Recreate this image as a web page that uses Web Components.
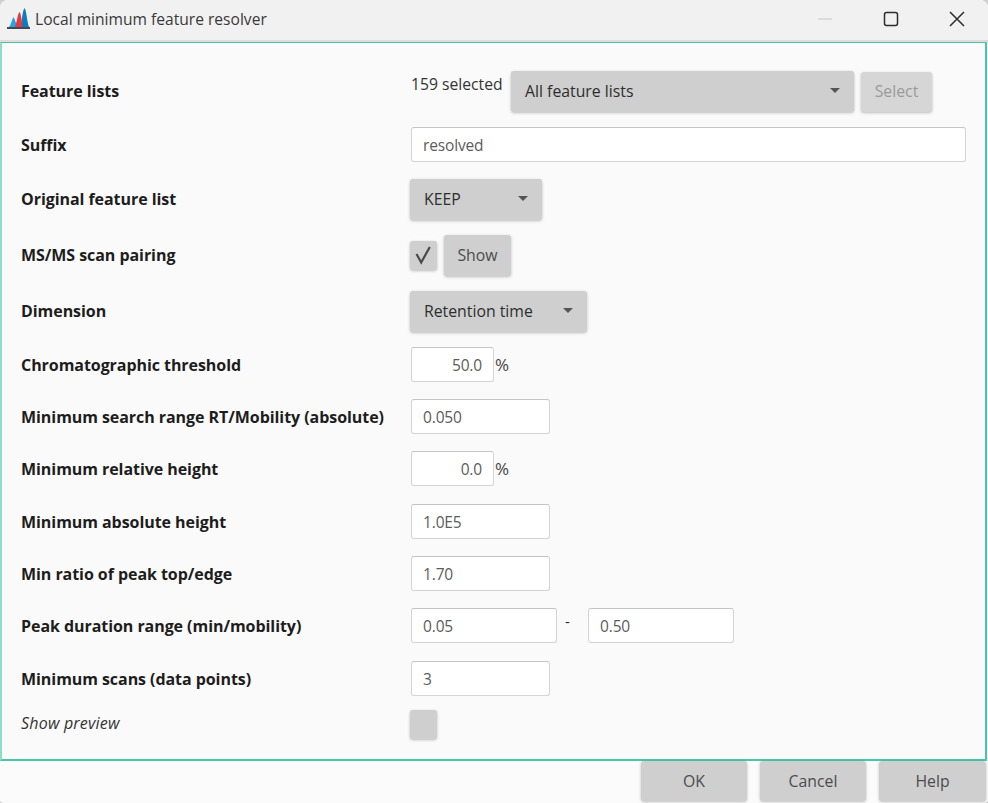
<!DOCTYPE html>
<html>
<head>
<meta charset="utf-8">
<title>Local minimum feature resolver</title>
<style>
  html, body { margin: 0; height: 100%; background: #cfcfcf; }
  body { font-family: "Open Sans", "Noto Sans", sans-serif; color: #2b2b2b; overflow: hidden; }
</style>
</head>
<body>
<app-window>
  <title-bar slot="title">Local minimum feature resolver</title-bar>
  <form-panel>
    <form-row label="Feature lists" h="41" gap="0" tall>
      <span style="flex:none;width:92px;white-space:nowrap;font-size:15.7px;margin:-16px 8px 0 1px;color:#333">159 selected</span>
      <combo-box w="343">All feature lists</combo-box>
      <push-button w="71" h="40" disabled style="margin-left:7px;padding-bottom:2px">Select</push-button>
    </form-row>
    <form-row label="Suffix" h="35" gap="15"><text-field w="555" style="margin-left:1px">resolved</text-field></form-row>
    <form-row label="Original feature list" h="41" gap="17" tall><combo-box w="132">KEEP</combo-box></form-row>
    <form-row label="MS/MS scan pairing" h="41" gap="15" tall>
      <check-box checked></check-box>
      <push-button w="67" h="41" style="margin-left:7px;padding-bottom:2px">Show</push-button>
    </form-row>
    <form-row label="Dimension" h="41" gap="15" tall><combo-box w="177">Retention time</combo-box></form-row>
    <form-row label="Chromatographic threshold" h="35" gap="15"><text-field w="83" end style="margin-left:1px">50.0</text-field><unit-text>%</unit-text></form-row>
    <form-row label="Minimum search range RT/Mobility (absolute)" h="35" gap="17"><text-field w="139" style="margin-left:1px">0.050</text-field></form-row>
    <form-row label="Minimum relative height" h="35" gap="17"><text-field w="83" end style="margin-left:1px">0.0</text-field><unit-text>%</unit-text></form-row>
    <form-row label="Minimum absolute height" h="35" gap="18"><text-field w="139" style="margin-left:1px">1.0E5</text-field></form-row>
    <form-row label="Min ratio of peak top/edge" h="35" gap="17"><text-field w="139" style="margin-left:1px">1.70</text-field></form-row>
    <form-row label="Peak duration range (min/mobility)" h="35" gap="17">
      <text-field w="146" style="margin-left:1px">0.05</text-field>
      <span style="width:31px;box-sizing:border-box;padding-left:8px;font-size:15px;margin-top:-10px">-</span>
      <text-field w="146">0.50</text-field>
    </form-row>
    <form-row label="Minimum scans (data points)" h="35" gap="18"><text-field w="139" style="margin-left:1px">3</text-field></form-row>
    <form-row label="Show preview" h="30" gap="13" plain><check-box></check-box></form-row>
  </form-panel>
  <button-bar slot="footer">
    <push-button w="106" h="40">OK</push-button>
    <push-button w="106" h="40">Cancel</push-button>
    <push-button w="107" h="40">Help</push-button>
  </button-bar>
</app-window>

<script>
function shadow(el, html) {
  el.attachShadow({ mode: "open" });
  el.shadowRoot.innerHTML = html;
}

class AppWindow extends HTMLElement {
  constructor() {
    super();
    shadow(this, `
      <style>
        :host { display: flex; flex-direction: column; height: 803px; width: 988px; box-sizing: border-box;
                padding-bottom: 1px; background: #fbfbfb; border-radius: 8px 8px 4px 4px; overflow: hidden; }
      </style>
      <slot name="title"></slot>
      <slot></slot>
      <slot name="footer"></slot>
    `);
  }
}

class TitleBar extends HTMLElement {
  constructor() {
    super();
    shadow(this, `
      <style>
        :host { display: flex; align-items: center; height: 42px; box-sizing: border-box; background: #f1f1f1;
                border-bottom: 2px solid #dcdcdc; padding: 0 0 3px 7px; font-size: 15.6px; color: #3a3a3a; }
        svg.logo { width: 23px; height: 23px; margin-right: 5px; flex: none; }
        .name { flex: 1; }
        .ctl { width: 66px; height: 37px; display: flex; align-items: center; justify-content: center; }
        .ctl:last-child { margin-right: -2px; }
        .ctl svg { width: 16px; height: 16px; fill: none; stroke: #2c2c2c; stroke-width: 1.5; }
      </style>
      <svg class="logo" viewBox="0 0 23 23">
        <path d="M2 20 C4 18 5 12 6.5 10 C8 12 9 17 11 20Z" fill="#22a7e0"/>
        <path d="M13 20 C15 15 15.5 3 17.5 1 C19.5 3 20 15 22 20Z" fill="#0f7cc0"/>
        <path d="M8 20 C10 15 10.5 7 12.5 5 C14.5 7 14.5 15 15.5 20Z" fill="#e63a40"/>
        <rect x="0" y="20" width="23" height="2" fill="#3b4a5c"/>
      </svg>
      <span class="name"><slot></slot></span>
      <span class="ctl"><svg viewBox="0 0 16 16" style="stroke:#d4d4d4"><path d="M1 8h14"/></svg></span>
      <span class="ctl"><svg viewBox="0 0 16 16"><rect x="1.5" y="1.5" width="13" height="13" rx="2"/></svg></span>
      <span class="ctl"><svg viewBox="0 0 16 16"><path d="M1 1l14 14M15 1L1 15"/></svg></span>
    `);
  }
}

class FormPanel extends HTMLElement {
  constructor() {
    super();
    shadow(this, `
      <style>
        :host { display: block; height: 719px; box-sizing: border-box; background: #fafafa; margin-right: 1px;
                border: 2px solid #49c6a6; border-top-width: 1px; border-left-color: #8fdcc8; padding: 28px 19px 0; }
      </style>
      <slot></slot>
    `);
  }
}

class FormRow extends HTMLElement {
  constructor() {
    super();
    shadow(this, `
      <style>
        :host { display: grid; grid-template-columns: 389px 1fr; align-items: center; }
        .label { font-size: 16px; font-weight: 700; letter-spacing: -.06px; color: #1d1d1d; white-space: nowrap; }
        :host([tall]) .label { margin-top: -2px; }
        :host([plain]) .label { font-weight: 400; font-style: italic; color: #333; letter-spacing: .2px; margin-top: -3px; }
        .field { display: flex; align-items: center; }
      </style>
      <span class="label"></span>
      <div class="field"><slot></slot></div>
    `);
  }
  connectedCallback() {
    this.shadowRoot.querySelector(".label").textContent = this.getAttribute("label");
    this.style.height = this.getAttribute("h") + "px";
    this.style.marginTop = this.getAttribute("gap") + "px";
  }
}

class ComboBox extends HTMLElement {
  constructor() {
    super();
    shadow(this, `
      <style>
        :host { display: flex; align-items: center; justify-content: space-between; height: 41px; box-sizing: border-box;
                padding: 0 14px 2px 14px; background: #cfcfcf; border-radius: 3px; box-shadow: 0 1px 3px rgba(0,0,0,.25);
                font-size: 15.8px; color: #2e2e2e; }
        i { width: 0; height: 0; border: 5px solid transparent; border-top: 5px solid #555; border-bottom: 0; margin-top: -1px; }
      </style>
      <span><slot></slot></span><i></i>
    `);
  }
  connectedCallback() { this.style.width = this.getAttribute("w") + "px"; }
}

class TextField extends HTMLElement {
  constructor() {
    super();
    shadow(this, `
      <style>
        :host { display: flex; align-items: center; height: 35px; box-sizing: border-box; padding: 0 11px;
                background: #fff; border: 1.5px solid #d4d4d4; border-top-color: #c4c4c4; border-radius: 3px;
                font-size: 15.5px; letter-spacing: -.15px; color: #5c5c5c; }
        :host([end]) { justify-content: flex-end; }
      </style>
      <slot></slot>
    `);
  }
  connectedCallback() { this.style.width = this.getAttribute("w") + "px"; }
}

class UnitText extends HTMLElement {
  constructor() {
    super();
    shadow(this, `
      <style>:host { display: inline-block; margin-left: 1px; font-size: 17px; color: #444; }</style>
      <slot></slot>
    `);
  }
}

class CheckBox extends HTMLElement {
  constructor() {
    super();
    shadow(this, `
      <style>
        :host { display: flex; align-items: center; justify-content: center; width: 27px; height: 29px; box-sizing: border-box;
                background: #cfcfcf; border-radius: 3px; box-shadow: 0 1px 3px rgba(0,0,0,.25); }
        svg { width: 18px; height: 20px; fill: none; stroke: #4a4a4a; stroke-width: 2.2; }
      </style>
    `);
  }
  connectedCallback() {
    if (this.hasAttribute("checked")) {
      this.shadowRoot.innerHTML += `<svg viewBox="0 0 18 20"><path d="M1.5 8L6.2 16.5 14.8 1"/></svg>`;
    }
  }
}

class PushButton extends HTMLElement {
  constructor() {
    super();
    shadow(this, `
      <style>
        :host { display: flex; align-items: center; justify-content: center; box-sizing: border-box; background: #cfcfcf;
                border-radius: 3px; box-shadow: 0 1px 3px rgba(0,0,0,.25);
                font-size: 15.8px; color: #4c4c4c; }
        :host([disabled]) { background: #d6d6d6; color: #9a9a9a; }
      </style>
      <slot></slot>
    `);
  }
  connectedCallback() {
    this.style.width = this.getAttribute("w") + "px";
    this.style.height = this.getAttribute("h") + "px";
  }
}

class ButtonBar extends HTMLElement {
  constructor() {
    super();
    shadow(this, `
      <style>
        :host { display: flex; justify-content: flex-end; gap: 13px; padding-right: 2px; background: #fbfbfb; flex: 1; }
      </style>
      <slot></slot>
    `);
  }
}

customElements.define("app-window", AppWindow);
customElements.define("title-bar", TitleBar);
customElements.define("form-panel", FormPanel);
customElements.define("form-row", FormRow);
customElements.define("combo-box", ComboBox);
customElements.define("text-field", TextField);
customElements.define("unit-text", UnitText);
customElements.define("check-box", CheckBox);
customElements.define("push-button", PushButton);
customElements.define("button-bar", ButtonBar);
</script>
</body>
</html>
